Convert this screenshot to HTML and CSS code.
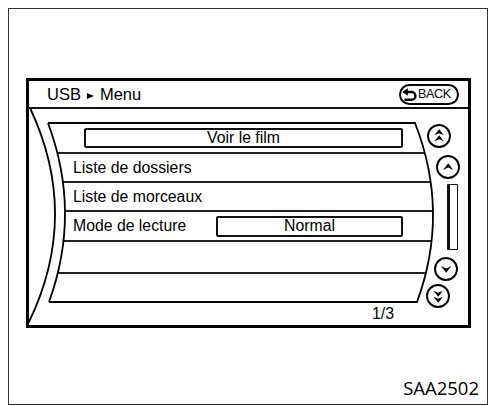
FILE: index.html
```html
<!DOCTYPE html>
<html>
<head>
<meta charset="utf-8">
<link rel="stylesheet" href="styles.css">
</head>
<body>
<div class="frame">
  <div class="screen">
    <div class="header">
      <div class="title">USB<span class="tri"></span>Menu</div>
      <div class="back">
        <svg class="back-icon" width="15" height="13" viewBox="0 0 15 13">
          <polygon points="0.3,4 5.8,0.3 5.8,7.7" fill="#000"/>
          <path d="M5,4 H9.5 A3.9,3.9 0 0 1 9.5,11.8 H2.5" fill="none" stroke="#000" stroke-width="2.4"/>
        </svg>
        <span>BACK</span>
      </div>
    </div>
    <div class="body">
      <div class="listcol">
        <div class="list">
          <div class="row r1"><div class="field wide">Voir le film</div></div>
          <div class="row r2"><span class="label">Liste de dossiers</span></div>
          <div class="row r3"><span class="label">Liste de morceaux</span></div>
          <div class="row r4"><span class="label fixed">Mode de lecture</span><div class="field narrow">Normal</div></div>
          <div class="row r5"></div>
          <div class="row r6"></div>
        </div>
        <div class="page">1/3</div>
      </div>
      <div class="scroll">
        <div class="btn b1">
          <svg width="24" height="24" viewBox="0 0 24 24"><circle cx="12" cy="12" r="11" fill="none" stroke="#000" stroke-width="1.9"/><path d="M7.2,11.2 L12.3,5.2 L16.8,11.2 L12.2,9.2 Z M7.2,17.2 L12.3,11.2 L16.8,17.2 L12.2,15.2 Z" fill="#000"/></svg>
        </div>
        <div class="btn b2">
          <svg width="24" height="24" viewBox="0 0 24 24"><circle cx="12" cy="12" r="11" fill="none" stroke="#000" stroke-width="1.9"/><path d="M6.8,15 L12.3,8.2 L17.2,15 L12.2,12.6 Z" fill="#000"/></svg>
        </div>
        <div class="bar"></div>
        <div class="btn b3">
          <svg width="24" height="24" viewBox="0 0 24 24"><circle cx="12" cy="12" r="11" fill="none" stroke="#000" stroke-width="1.9"/><path d="M6.8,9 L12.3,15.8 L17.2,9 L12.2,11.4 Z" fill="#000"/></svg>
        </div>
        <div class="btn b4">
          <svg width="24" height="24" viewBox="0 0 24 24"><circle cx="12" cy="12" r="11" fill="none" stroke="#000" stroke-width="1.9"/><path d="M7.2,6.8 L12.3,12.8 L16.8,6.8 L12.2,8.8 Z M7.2,12.8 L12.3,18.8 L16.8,12.8 L12.2,14.8 Z" fill="#000"/></svg>
        </div>
      </div>
    </div>
    <svg class="deco" width="439" height="244" viewBox="29 81 439 244">
      <path d="M30.5,109 Q81,217 27.5,325" />
      <path d="M48,123 Q81.5,212.5 49,302" />
      <path d="M48,123 H415 Q450,212.5 417,302 H49" />
    </svg>
  </div>
  <div class="code">SAA2502</div>
</div>
</body>
</html>
```

FILE: styles.css
```css
* { box-sizing: border-box; }

html, body {
  margin: 0;
  padding: 0;
  background: #fff;
}

body {
  font-family: "Liberation Sans", Arial, sans-serif;
  color: #000;
}

.frame {
  width: 480px;
  height: 397px;
  margin: 8px;
  border: 1px solid #333;
  display: flex;
  flex-direction: column;
}

.screen {
  position: relative;
  width: 445px;
  height: 250px;
  margin: 69px 0 0 17px;
  border: 3px solid #000;
}

.header {
  height: 28px;
  border-bottom: 2px solid #111;
  display: flex;
  align-items: center;
  justify-content: space-between;
  padding: 0 9px 0 18px;
}

.title {
  font-size: 16.5px;
  line-height: 16px;
}

.tri {
  display: inline-block;
  width: 0;
  height: 0;
  border-top: 3.5px solid transparent;
  border-bottom: 3.5px solid transparent;
  border-left: 7px solid #000;
  margin: 0 6px 0 6px;
  vertical-align: 1px;
}

.back {
  width: 60px;
  height: 21px;
  border: 2px solid #000;
  border-radius: 11px;
  display: flex;
  align-items: center;
  padding-left: 1px;
  gap: 1px;
}

.back-icon {
  display: block;
  flex: none;
}

.back span {
  font-size: 12.5px;
  line-height: 13px;
  letter-spacing: -0.3px;
}

.body {
  display: flex;
}

.listcol {
  width: 386px;
  margin-left: 19px;
  margin-top: 14px;
  flex: none;
}

.list {
  height: 179px;
  display: flex;
  flex-direction: column;
  clip-path: path('M0,0 L367,0 Q402,89.5 369,179 L1,179 Q33.5,89.5 0,0 Z');
}

.row {
  flex: none;
  display: flex;
  align-items: center;
  border-bottom: 2px solid #222;
  padding-left: 25px;
  font-size: 15.8px;
  line-height: 16px;
}

.r1 { height: 31px; padding-left: 36px; }
.r2 { height: 29px; }
.r3 { height: 29px; }
.r4 { height: 30px; }
.r5 { height: 32px; }
.r6 { height: 28px; border-bottom: none; }

.label.fixed {
  width: 143px;
  flex: none;
}

.field {
  border: 2px solid #111;
  border-radius: 2px;
  display: flex;
  align-items: center;
  justify-content: center;
  flex: none;
}

.field.wide {
  width: 319px;
  height: 20px;
}

.field.narrow {
  width: 187px;
  height: 21px;
}

.page {
  margin-top: 4px;
  text-align: right;
  padding-right: 40px;
  font-size: 15.8px;
  line-height: 16px;
}

.scroll {
  width: 44px;
  margin-left: -10px;
  display: flex;
  flex-direction: column;
  align-items: flex-start;
  flex: none;
}

.btn {
  width: 24px;
  height: 24px;
  flex: none;
}

.btn svg { display: block; }

.b1 { margin: 15px 0 0 3px; }
.b2 { margin: 7px 0 0 12px; }
.bar {
  width: 11px;
  height: 66px;
  margin: 5px 0 0 23px;
  border: 1.5px solid #111;
  border-left: 3px solid #111;
  border-radius: 1px;
}
.b3 { margin: 7px 0 0 10px; }
.b4 { margin: 3px 0 0 2px; }

.deco {
  position: absolute;
  top: 0;
  left: 0;
  pointer-events: none;
}

.deco path {
  fill: none;
  stroke: #000;
  stroke-width: 1.8;
}

.code {
  margin-top: auto;
  text-align: right;
  padding: 0 8px 7px 0;
  font-family: "Open Sans", "Liberation Sans", sans-serif;
  font-size: 18.5px;
  font-weight: 500;
  line-height: 18.5px;
  color: #000;
}
```
